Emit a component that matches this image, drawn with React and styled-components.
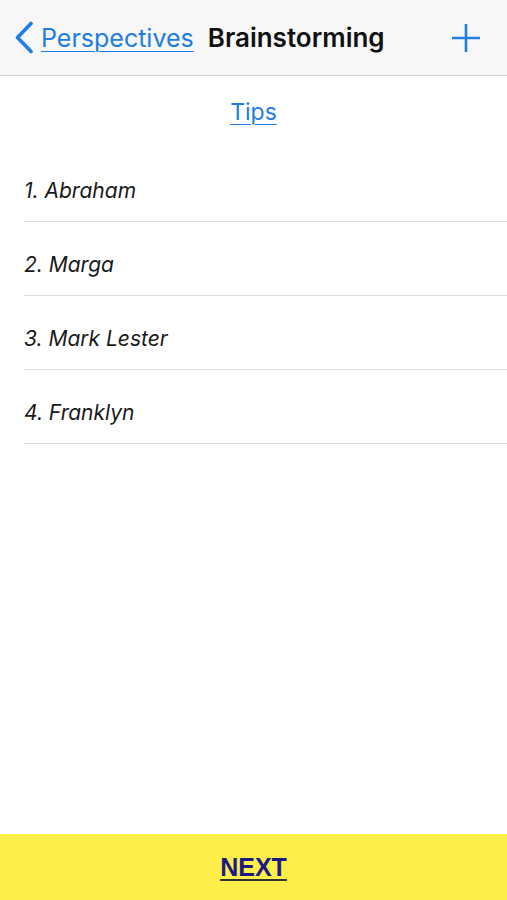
import React from 'react';
import styled, { createGlobalStyle } from 'styled-components';

const GlobalStyle = createGlobalStyle`
  html, body {
    margin: 0;
    padding: 0;
    background: #ffffff;
  }
  body {
    font-family: Inter, "Noto Sans", "Liberation Sans", sans-serif;
  }
`;

const Page = styled.div`
  display: flex;
  flex-direction: column;
  min-height: 100vh;
`;

const Header = styled.header`
  display: flex;
  align-items: center;
  height: 75px;
  padding: 0 0 0 14px;
  background: #f7f7f7;
  border-bottom: 1px solid #cfcfcf;
`;

const Back = styled.a`
  display: flex;
  align-items: center;
  gap: 7px;
  color: #1f7de3;
  font-size: 25px;
  text-decoration: underline;
  text-underline-offset: 4px;
  text-decoration-thickness: 1px;
  cursor: pointer;
`;

const Title = styled.h1`
  margin: 0 0 0 14px;
  font-size: 26px;
  font-weight: 600;
  color: #111;
  flex: 1;
`;

const AddButton = styled.button`
  display: flex;
  align-items: center;
  justify-content: center;
  width: 40px;
  height: 40px;
  margin-right: 21px;
  padding: 0;
  border: 0;
  background: none;
`;

const TipsRow = styled.div`
  display: flex;
  justify-content: center;
  align-items: center;
  height: 72px;
`;

const TipsLink = styled.a`
  color: #1f7de3;
  font-size: 23px;
  text-decoration: underline;
  text-underline-offset: 4px;
  text-decoration-thickness: 1px;
  cursor: pointer;
`;

const List = styled.ul`
  flex: 1;
  margin: 0;
  padding: 0 0 0 24px;
  list-style: none;
`;

const Item = styled.li`
  height: 73px;
  display: flex;
  align-items: flex-end;
  border-bottom: 1px solid #dcdcdc;
  font-size: 21px;
  font-style: italic;
  color: #1a1a1a;

  span {
    line-height: 28px;
    padding-bottom: 16px;
  }
`;

const Footer = styled.div`
  display: flex;
  align-items: center;
  justify-content: center;
  height: 66px;
  background: #fdee4a;
`;

const NextLink = styled.a`
  font-family: "Liberation Sans", Arial, sans-serif;
  font-size: 25px;
  font-weight: 700;
  color: #1b1a86;
  text-decoration: underline;
  text-decoration-color: #333;
  text-underline-offset: 3px;
  cursor: pointer;
`;

const people = ['Abraham', 'Marga', 'Mark Lester', 'Franklyn'];

export default function App() {
  return (
    <>
      <GlobalStyle />
      <Page>
        <Header>
          <Back>
            <svg width="20" height="33" viewBox="0 0 20 33" fill="none">
              <path d="M17 2.5L3.5 16.5L17 30.5" stroke="#1f7de3" strokeWidth="3.6" strokeLinecap="round" strokeLinejoin="round" />
            </svg>
            Perspectives
          </Back>
          <Title>Brainstorming</Title>
          <AddButton aria-label="Add">
            <svg width="30" height="30" viewBox="0 0 30 30">
              <path d="M15 1V29M1 15H29" stroke="#1f7de3" strokeWidth="2.6" />
            </svg>
          </AddButton>
        </Header>
        <TipsRow>
          <TipsLink>Tips</TipsLink>
        </TipsRow>
        <List>
          {people.map((name, i) => (
            <Item key={name}>
              <span>{i + 1}. {name}</span>
            </Item>
          ))}
        </List>
        <Footer>
          <NextLink>NEXT</NextLink>
        </Footer>
      </Page>
    </>
  );
}
